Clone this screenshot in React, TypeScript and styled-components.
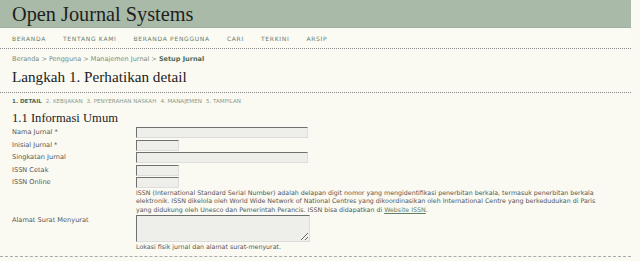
import styled, { createGlobalStyle } from "styled-components";

const GlobalStyle = createGlobalStyle`
  body {
    margin: 0;
    background: #fafaf3;
    font-family: "DejaVu Sans", Verdana, sans-serif;
    color: #444;
  }
`;

const navItems = ["Beranda", "Tentang Kami", "Beranda Pengguna", "Cari", "Terkini", "Arsip"];
const steps = ["1. Detail", "2. Kebijakan", "3. Penyerahan Naskah", "4. Manajemen", "5. Tampilan"];

const fields: { label: string; wide: boolean }[] = [
  { label: "Nama Jurnal *", wide: true },
  { label: "Inisial Jurnal *", wide: false },
  { label: "Singkatan Jurnal", wide: true },
  { label: "ISSN Cetak", wide: false },
  { label: "ISSN Online", wide: false },
];

const App = () => {
  return (
    <>
      <GlobalStyle />
      <Page>
        <Header>
          <SiteTitle>Open Journal Systems</SiteTitle>
        </Header>
        <NavBar>
          {navItems.map((item) => (
            <NavLink key={item}>{item}</NavLink>
          ))}
        </NavBar>
        <Breadcrumb>
          Beranda &gt; Pengguna &gt; Manajemen Jurnal &gt; <strong>Setup Jurnal</strong>
        </Breadcrumb>
        <PageTitle>Langkah 1. Perhatikan detail</PageTitle>
        <Steps>
          {steps.map((step, index) => (
            <Step key={step} $active={index === 0}>
              {step}
            </Step>
          ))}
        </Steps>
        <SectionTitle>1.1 Informasi Umum</SectionTitle>
        <Form>
          {fields.map((field) => (
            <FieldRow key={field.label}>
              <Label>{field.label}</Label>
              <TextInput $wide={field.wide} />
            </FieldRow>
          ))}
          <FieldRow>
            <span />
            <Help $tight>
              ISSN (International Standard Serial Number) adalah delapan digit nomor yang mengidentifikasi
              penerbitan berkala, termasuk penerbitan berkala elektronik. ISSN dikelola oleh World Wide Network of
              National Centres yang dikoordinasikan oleh International Centre yang berkedudukan di Paris yang
              didukung oleh Unesco dan Pemerintah Perancis. ISSN bisa didapatkan di <HelpLink>Website ISSN</HelpLink>.
            </Help>
          </FieldRow>
          <FieldRow>
            <Label>Alamat Surat Menyurat</Label>
            <div>
              <TextArea />
              <Help>Lokasi fisik jurnal dan alamat surat-menyurat.</Help>
            </div>
          </FieldRow>
        </Form>
        <Separator />
      </Page>
    </>
  );
};

export default App;

const Page = styled.div`
  width: 631px;
  height: 261px;
  overflow: hidden;
`;

const Header = styled.div`
  height: 27px;
  background: #a9bba8;
  border-bottom: 1px solid #9fb09e;
  padding-left: 12px;
  display: flex;
  align-items: flex-end;
`;

const SiteTitle = styled.div`
  font-family: "Liberation Serif", serif;
  font-size: 20.3px;
  line-height: 24px;
  color: #1e1e1e;
  padding-bottom: 1px;
`;

const NavBar = styled.div`
  display: flex;
  gap: 17px;
  height: 20px;
  align-items: center;
  padding: 0 12px;
  border-bottom: 1px dotted #888;
  background: #fbfbf4;
`;

const NavLink = styled.span`
  font-size: 6px;
  letter-spacing: 0.7px;
  text-transform: uppercase;
  color: #6a7a6a;
`;

const Breadcrumb = styled.div`
  padding: 6px 12px 0;
  font-size: 6.5px;
  line-height: 9px;
  color: #7b8b7b;
  strong {
    color: #4f6a55;
  }
`;

const PageTitle = styled.h2`
  margin: 0;
  padding: 4px 12px 6px;
  font-family: "Liberation Serif", serif;
  font-weight: normal;
  font-size: 15.2px;
  line-height: 18px;
  color: #222;
  border-bottom: 1px dotted #888;
`;

const Steps = styled.div`
  display: flex;
  gap: 4px;
  padding: 4px 12px 0;
  line-height: 8px;
`;

const Step = styled.span<{ $active: boolean }>`
  font-size: 5.6px;
  text-transform: uppercase;
  color: ${(p) => (p.$active ? "#4f6a55" : "#8a9a8a")};
  font-weight: ${(p) => (p.$active ? "bold" : "normal")};
`;

const SectionTitle = styled.h3`
  margin: 0;
  padding: 6px 12px 2px;
  font-family: "Liberation Serif", serif;
  font-weight: normal;
  font-size: 12.6px;
  line-height: 14px;
  color: #222;
`;

const Form = styled.div`
  display: flex;
  flex-direction: column;
  gap: 1.5px;
  padding: 0 12px;
`;

const FieldRow = styled.div`
  display: grid;
  grid-template-columns: 124px 1fr;
  align-items: start;
`;

const Label = styled.span`
  font-size: 6.6px;
  line-height: 11px;
  color: #555;
`;

const TextInput = styled.input<{ $wide: boolean }>`
  box-sizing: border-box;
  width: ${(p) => (p.$wide ? "172px" : "43px")};
  height: 11px;
  margin: 0;
  padding: 0;
  background: #eeeeea;
  border: 1px solid #dddddb;
  border-top-color: #707070;
  border-left-color: #707070;
`;

const Help = styled.div<{ $tight?: boolean }>`
  max-width: 474px;
  font-size: 6.3px;
  line-height: 8.5px;
  color: #555;
  margin: ${(p) => (p.$tight ? "-1px 0 -1px" : "1px 0 0")};
`;

const HelpLink = styled.span`
  display: inline-block;
  line-height: 8.5px;
  color: #5f7f65;
  text-decoration: underline;
`;

const TextArea = styled.textarea`
  display: block;
  box-sizing: border-box;
  width: 174px;
  height: 27px;
  margin: 0;
  background: #eeeeea;
  border: 1px solid #dddddb;
  border-top-color: #707070;
  border-left-color: #707070;
`;

const Separator = styled.div`
  margin-top: 5px;
  border-bottom: 1px dashed #aaa;
`;
